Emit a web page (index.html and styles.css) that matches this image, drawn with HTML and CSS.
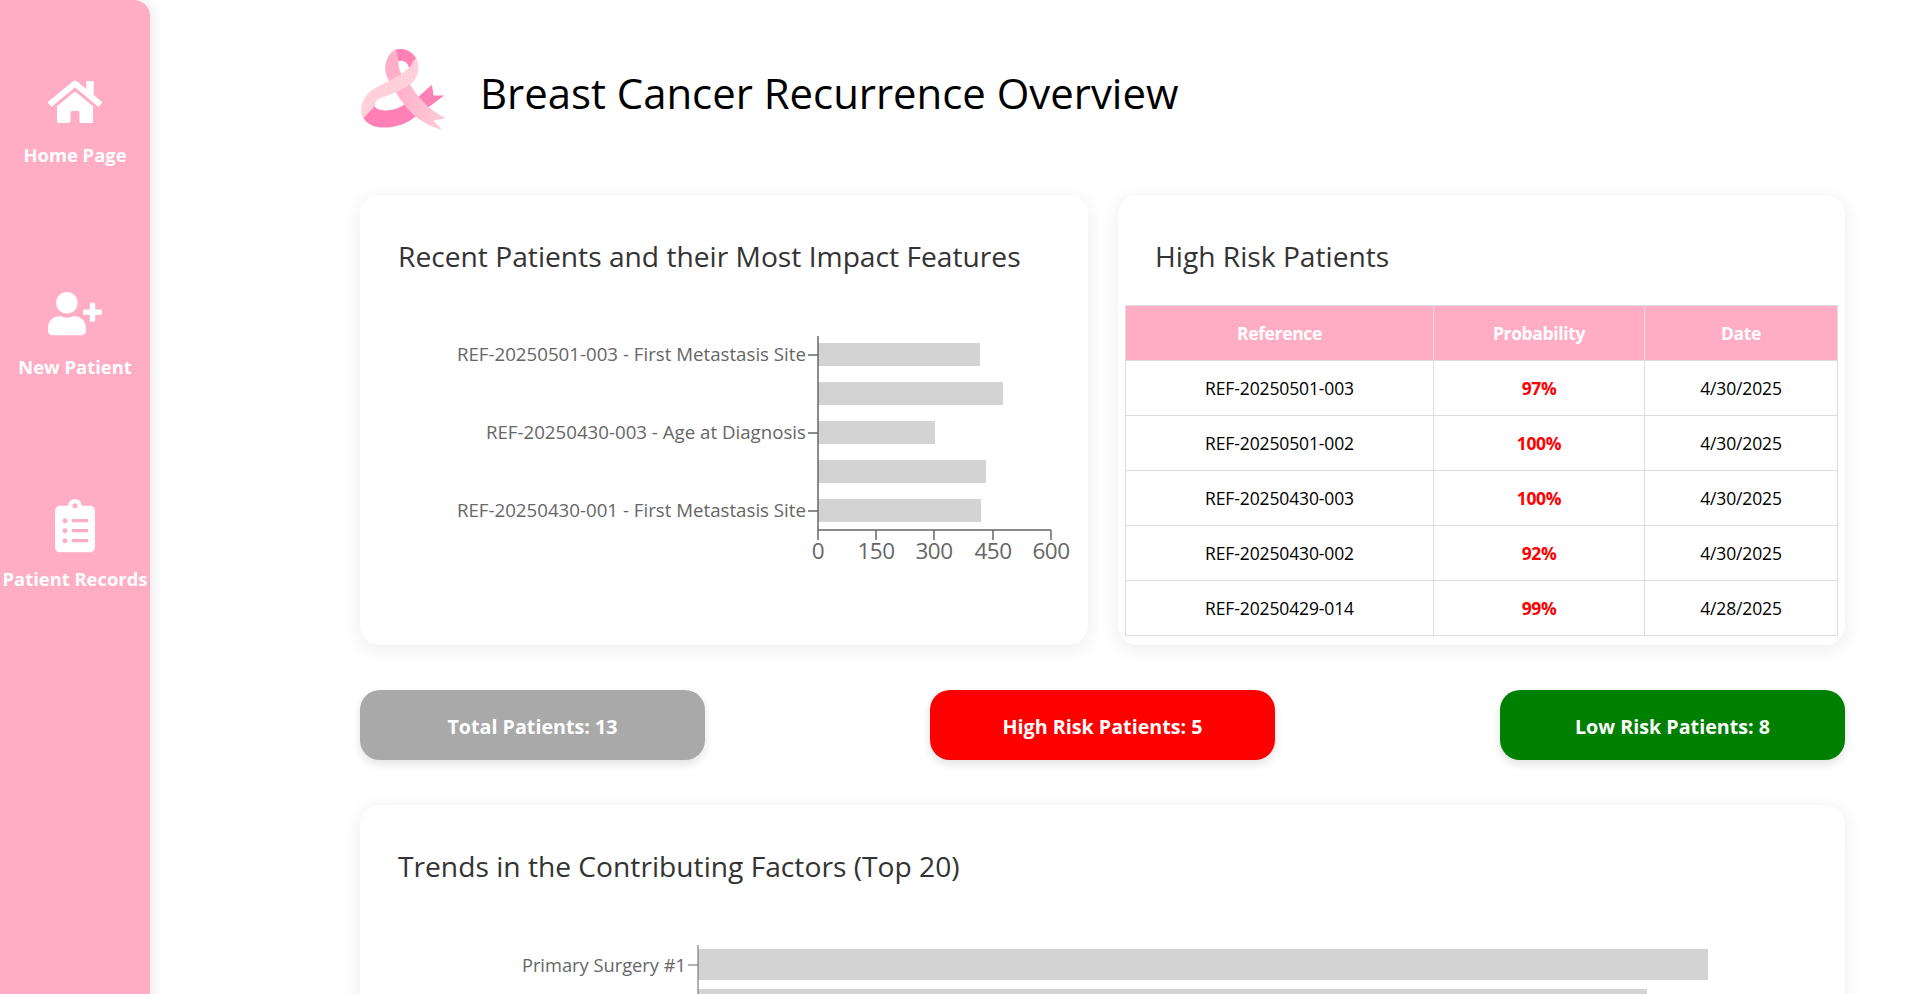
FILE: index.html
```
<!DOCTYPE html>
<html lang="en">
<head>
<meta charset="utf-8">
<title>Breast Cancer Recurrence Overview</title>
<link rel="stylesheet" href="styles.css">
</head>
<body>
<div class="shell">
  <nav class="sidebar">
    <a class="nav-item">
      <span class="nav-icon"><svg class="icon-home" viewBox="0 0 576 512"><path d="M280.37 148.26L96 300.11V464a16 16 0 0 0 16 16l112.06-.29a16 16 0 0 0 15.92-16V368a16 16 0 0 1 16-16h64a16 16 0 0 1 16 16v95.64a16 16 0 0 0 16 16.05L464 480a16 16 0 0 0 16-16V300L295.67 148.26a12.19 12.19 0 0 0-15.3 0zM571.6 251.47L488 182.56V44.05a12 12 0 0 0-12-12h-56a12 12 0 0 0-12 12v72.61L318.47 43a48 48 0 0 0-61 0L4.34 251.47a12 12 0 0 0-1.6 16.9l25.5 31A12 12 0 0 0 45.15 301l235.22-193.74a12.19 12.19 0 0 1 15.3 0L530.9 301a12 12 0 0 0 16.9-1.6l25.5-31a12 12 0 0 0-1.7-16.93z"/></svg></span>
      <span class="nav-label">Home Page</span>
    </a>
    <a class="nav-item">
      <span class="nav-icon"><svg class="icon-user" viewBox="0 0 640 512"><path d="M624 208h-64v-64c0-8.8-7.2-16-16-16h-32c-8.8 0-16 7.2-16 16v64h-64c-8.8 0-16 7.2-16 16v32c0 8.8 7.2 16 16 16h64v64c0 8.8 7.2 16 16 16h32c8.8 0 16-7.2 16-16v-64h64c8.8 0 16-7.2 16-16v-32c0-8.8-7.2-16-16-16zm-400 48c70.7 0 128-57.3 128-128S294.7 0 224 0 96 57.3 96 128s57.3 128 128 128zm89.6 32h-16.7c-22.2 10.2-46.9 16-72.9 16s-50.6-5.8-72.9-16h-16.7C60.2 288 0 348.2 0 422.4V464c0 26.5 21.5 48 48 48h352c26.5 0 48-21.5 48-48v-41.6c0-74.2-60.2-134.4-134.4-134.4z"/></svg></span>
      <span class="nav-label">New Patient</span>
    </a>
    <a class="nav-item">
      <span class="nav-icon"><svg class="icon-clip" viewBox="0 0 384 512"><path d="M336 64h-80c0-35.3-28.7-64-64-64s-64 28.7-64 64H48C21.5 64 0 85.5 0 112v352c0 26.5 21.5 48 48 48h288c26.5 0 48-21.5 48-48V112c0-26.5-21.5-48-48-48zM96 424c-13.3 0-24-10.7-24-24s10.7-24 24-24 24 10.7 24 24-10.7 24-24 24zm0-96c-13.3 0-24-10.7-24-24s10.7-24 24-24 24 10.7 24 24-10.7 24-24 24zm0-96c-13.3 0-24-10.7-24-24s10.7-24 24-24 24 10.7 24 24-10.7 24-24 24zm96-192c13.3 0 24 10.7 24 24s-10.7 24-24 24-24-10.7-24-24 10.7-24 24-24zm128 368c0 4.4-3.6 8-8 8H168c-4.4 0-8-3.6-8-8v-16c0-4.4 3.6-8 8-8h144c4.4 0 8 3.6 8 8v16zm0-96c0 4.4-3.6 8-8 8H168c-4.4 0-8-3.6-8-8v-16c0-4.4 3.6-8 8-8h144c4.4 0 8 3.6 8 8v16zm0-96c0 4.4-3.6 8-8 8H168c-4.4 0-8-3.6-8-8v-16c0-4.4 3.6-8 8-8h144c4.4 0 8 3.6 8 8v16z"/></svg></span>
      <span class="nav-label">Patient Records</span>
    </a>
  </nav>

  <main class="main">
    <header class="page-header">
      <svg class="logo" viewBox="60 55 260 250">
        <defs>
          <linearGradient id="tail-fill" x1="0" y1="0" x2="1" y2="0.3">
            <stop offset="0" stop-color="#ffafc9"/>
            <stop offset="1" stop-color="#ffc8d6"/>
          </linearGradient>
        </defs>
        <path class="rb-dark" d="M222 212L275 165L280 197L312 197L225 262Z"/>
        <path class="rb-dark" d="M65 250C70 280 105 298 150 292C185 288 210 275 228 258L195 222C175 240 140 245 120 240C105 236 100 228 105 222Z"/>
        <path class="rb-dark" d="M165 60C190 52 225 65 233 100L207 118C205 100 190 88 175 95Z"/>
        <path class="rb-light" d="M165 60C145 70 135 95 135 118C135 140 155 170 175 195L205 165C190 145 175 125 175 100C175 85 172 70 165 60Z"/>
        <path class="rb-pale" d="M228 85C240 115 235 140 215 160C190 182 150 195 120 205C108 212 103 220 105 228L70 265C58 245 62 215 85 190C105 170 150 155 180 135C200 122 215 110 218 95Z"/>
        <path class="rb-tail" d="M168 188C185 180 200 172 208 162C225 190 260 240 317 265L280 272L305 300C270 290 235 270 215 250C195 230 180 210 168 188Z"/>
      </svg>
      <h1 class="page-title">Breast Cancer Recurrence Overview</h1>
    </header>

    <section class="card-row">
      <article class="card">
        <h2 class="card-title">Recent Patients and their Most Impact Features</h2>
        <svg class="chart chart-small" viewBox="0 0 712 330">
          <g class="bars">
            <rect x="450" y="38" width="162" height="23"/>
            <rect x="450" y="77" width="185" height="23"/>
            <rect x="450" y="116" width="117" height="23"/>
            <rect x="450" y="155" width="168" height="23"/>
            <rect x="450" y="194" width="163" height="23"/>
          </g>
          <g class="axis">
            <line x1="450" y1="31" x2="450" y2="225"/>
            <line x1="450" y1="225" x2="683" y2="225"/>
            <line x1="440" y1="50" x2="450" y2="50"/>
            <line x1="440" y1="128" x2="450" y2="128"/>
            <line x1="440" y1="206" x2="450" y2="206"/>
            <line x1="450" y1="225" x2="450" y2="235"/>
            <line x1="508" y1="225" x2="508" y2="235"/>
            <line x1="566" y1="225" x2="566" y2="235"/>
            <line x1="625" y1="225" x2="625" y2="235"/>
            <line x1="683" y1="225" x2="683" y2="235"/>
          </g>
          <g class="y-labels">
            <text x="438" y="56">REF-20250501-003 - First Metastasis Site</text>
            <text x="438" y="134">REF-20250430-003 - Age at Diagnosis</text>
            <text x="438" y="212">REF-20250430-001 - First Metastasis Site</text>
          </g>
          <g class="x-labels">
            <text x="450" y="254">0</text>
            <text x="508" y="254">150</text>
            <text x="566" y="254">300</text>
            <text x="625" y="254">450</text>
            <text x="683" y="254">600</text>
          </g>
        </svg>
      </article>

      <article class="card card-table">
        <h2 class="card-title">High Risk Patients</h2>
        <table class="risk-table">
          <colgroup><col class="col-ref"><col class="col-prob"><col class="col-date"></colgroup>
          <thead>
            <tr><th>Reference</th><th>Probability</th><th>Date</th></tr>
          </thead>
          <tbody>
            <tr><td>REF-20250501-003</td><td class="prob">97%</td><td>4/30/2025</td></tr>
            <tr><td>REF-20250501-002</td><td class="prob">100%</td><td>4/30/2025</td></tr>
            <tr><td>REF-20250430-003</td><td class="prob">100%</td><td>4/30/2025</td></tr>
            <tr><td>REF-20250430-002</td><td class="prob">92%</td><td>4/30/2025</td></tr>
            <tr><td>REF-20250429-014</td><td class="prob">99%</td><td>4/28/2025</td></tr>
          </tbody>
        </table>
      </article>
    </section>

    <section class="stats">
      <div class="stat stat-total">Total Patients: 13</div>
      <div class="stat stat-high">High Risk Patients: 5</div>
      <div class="stat stat-low">Low Risk Patients: 8</div>
    </section>

    <article class="card card-wide">
      <h2 class="card-title">Trends in the Contributing Factors (Top 20)</h2>
      <svg class="chart chart-wide" viewBox="0 0 1469 120">
        <g class="bars">
          <rect x="330" y="34" width="1010" height="31"/>
          <rect x="330" y="74" width="949" height="31"/>
        </g>
        <g class="axis axis-thin">
          <line x1="330" y1="30" x2="330" y2="120"/>
          <line x1="320" y1="50" x2="330" y2="50"/>
        </g>
        <g class="y-labels y-labels-wide">
          <text x="318" y="57">Primary Surgery #1</text>
        </g>
      </svg>
    </article>
  </main>
</div>
</body>
</html>
```
FILE: styles.css
```
* { box-sizing: border-box; }

html, body {
  margin: 0;
  height: 100%;
  background: #fff;
  font-family: "Open Sans", "Noto Sans", sans-serif;
}

.shell {
  display: flex;
  height: 100vh;
  overflow: hidden;
}

.sidebar {
  flex: 0 0 150px;
  display: flex;
  flex-direction: column;
  gap: 119px;
  min-height: 1100px;
  padding-top: 74px;
  background: #ffadc5;
  border-top-right-radius: 16px;
  box-shadow: 4px 0 12px rgba(0, 0, 0, .07);
}

.nav-item {
  display: flex;
  flex-direction: column;
  align-items: center;
  gap: 13px;
  color: #fff;
}

.nav-icon {
  display: flex;
  align-items: center;
  justify-content: center;
  height: 56px;
}

.nav-icon svg { display: block; fill: #fff; }
.icon-home { width: 54px; height: 48px; }
.icon-user { width: 54px; height: 43.2px; }
.icon-clip { width: 40px; height: 53.3px; }

.nav-label {
  font-size: 18.4px;
  font-weight: 700;
  line-height: 24px;
  white-space: nowrap;
}

.main {
  flex: 1;
  min-width: 0;
  display: flex;
  flex-direction: column;
  gap: 45px;
  padding: 45px 75px 0 210px;
}

.page-header {
  flex: none;
  display: flex;
  align-items: center;
  gap: 33px;
  height: 105px;
  padding-bottom: 15px;
}

.logo { display: block; width: 87px; height: 83.5px; flex: none; }
.rb-dark { fill: #ff80b5; }
.rb-light { fill: #ffafc9; }
.rb-pale { fill: #ffd0da; }
.rb-tail { fill: url(#tail-fill); }

.page-title {
  margin: 5px 0 0;
  font-size: 41.9px;
  font-weight: 400;
  line-height: 54px;
  color: #000;
}

.card-row {
  flex: none;
  display: grid;
  grid-template-columns: 728px 727px;
  justify-content: space-between;
}

.card {
  flex: none;
  padding: 0 8px 9px;
  background: #fff;
  border-radius: 20px;
  box-shadow: 0 4px 20px rgba(0, 0, 0, .08);
}

.card-table { padding-left: 7px; }
.card-wide { min-height: 400px; }

.card-title {
  margin: 0 0 27px;
  padding: 39px 30px 0;
  font-size: 28.2px;
  font-weight: 400;
  line-height: 44px;
  color: #333;
}

.chart { display: block; width: 100%; }
.chart-small { height: 330px; }
.chart-wide { height: 120px; }

.bars rect { fill: #d3d3d3; }
.axis line { stroke: #666; stroke-width: 1.5; }
.axis-thin line { stroke-width: 1; }

.y-labels text {
  font-size: 18.7px;
  fill: #666;
  text-anchor: end;
}

.y-labels-wide text { font-size: 18.3px; }

.x-labels text {
  font-size: 22.5px;
  letter-spacing: -.5px;
  fill: #666;
  text-anchor: middle;
}

.risk-table {
  width: 100%;
  table-layout: fixed;
  border-collapse: collapse;
  font-size: 17.5px;
  letter-spacing: -.13px;
}

.col-ref { width: 308px; }
.col-prob { width: 211px; }
.col-date { width: 193px; }

.risk-table th,
.risk-table td {
  height: 55px;
  padding: 0;
  border: 1px solid #ddd;
  text-align: center;
  color: #000;
}

.risk-table th {
  font-weight: 700;
  letter-spacing: -.35px;
  background: #ffadc5;
  color: #fff;
}

.risk-table td.prob {
  font-weight: 700;
  letter-spacing: -.35px;
  color: #f00;
}

.stats {
  flex: none;
  display: flex;
  justify-content: space-between;
}

.stat {
  display: flex;
  align-items: center;
  justify-content: center;
  width: 345px;
  height: 70px;
  padding-top: 2px;
  border-radius: 20px;
  font-size: 19.7px;
  font-weight: 700;
  color: #fff;
  box-shadow: 0 4px 10px rgba(0, 0, 0, .12);
}

.stat-total { background: #a9a9a9; }
.stat-high { background: #f00; }
.stat-low { background: #008000; }
```
